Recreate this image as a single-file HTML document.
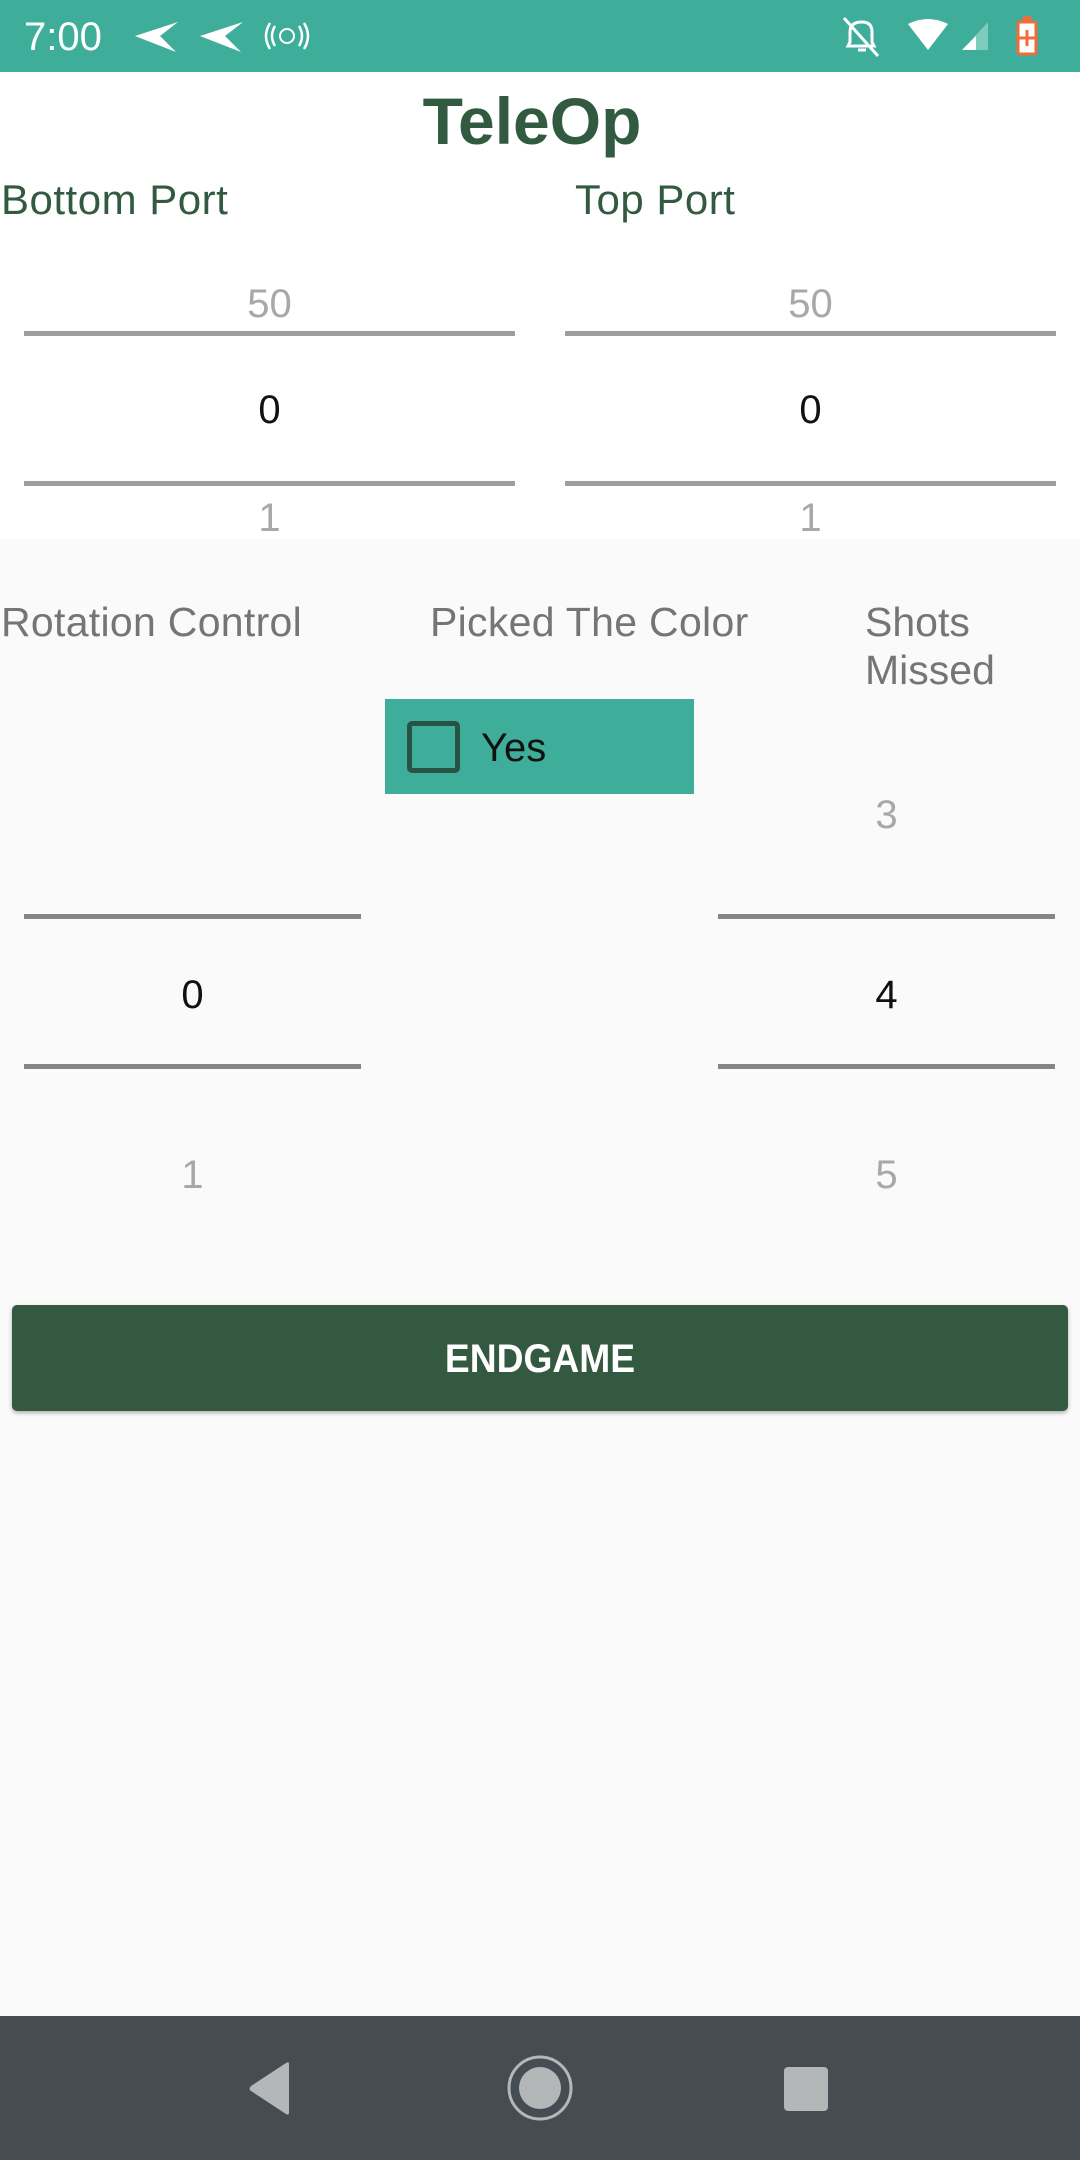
<!DOCTYPE html>
<html><head><meta charset="utf-8"><style>
*{margin:0;padding:0;box-sizing:border-box}
body{width:1080px;height:2160px;background:#fafafa;font-family:"Liberation Sans",sans-serif;position:relative;overflow:hidden}
.a{position:absolute}
.t{position:absolute;white-space:nowrap;line-height:1}
.ln{position:absolute;height:5px;background:#9e9e9e}
.ln2{position:absolute;height:5px;background:#858585}
.c{text-align:center}
</style></head><body>
<div class="a" style="left:0;top:0;width:1080px;height:72px;background:#3eae9b"></div>
<div class="t" style="left:24px;top:17px;font-size:40px;color:#fff">7:00</div>
<svg class="a" style="left:130px;top:18px" width="200" height="40" viewBox="0 0 200 40">
<path d="M5 18 L48 4 L30 18 L46 34 Z" fill="#fff"/>
<path d="M70 18 L113 4 L95 18 L111 34 Z" fill="#fff"/>
<circle cx="157" cy="18" r="7" fill="none" stroke="#fff" stroke-width="2"/>
<path d="M145 8 Q139 18 145 28 M169 8 Q175 18 169 28 M140 5 Q132 18 140 31 M174 5 Q182 18 174 31" fill="none" stroke="#fff" stroke-width="2.5"/>
</svg>
<svg class="a" style="left:840px;top:14px" width="210" height="48" viewBox="0 0 210 48">
<path d="M8 32 L10 28 L10 18 Q10 8 22 8 Q32 8 32 18 L32 28 L34 32 Z M18 36 L26 36" fill="none" stroke="#fff" stroke-width="3"/>
<path d="M4 4 L38 42" stroke="#fff" stroke-width="3"/>
<path d="M68 10 Q88 0 108 10 L88 36 Z" fill="#fff"/>
<path d="M122 36 L148 8 L148 36 Z" fill="#7fcbbd"/>
<path d="M122 36 L136 22 L136 36 Z" fill="#fff"/>
<rect x="178" y="8" width="18" height="32" rx="2" fill="#fff" stroke="#f26b3a" stroke-width="3"/>
<rect x="183" y="2" width="8" height="6" fill="#f26b3a"/>
<path d="M187 16 L187 32 M179 24 L195 24" stroke="#f26b3a" stroke-width="3"/>
</svg>
<div class="a" style="left:0;top:72px;width:1080px;height:467px;background:#fff"></div>
<div class="t c" style="left:-8px;width:1080px;top:88px;font-size:66px;font-weight:bold;color:#325a40">TeleOp</div>
<div class="t" style="left:1px;top:179px;font-size:42px;color:#325a40;letter-spacing:0.5px">Bottom Port</div>
<div class="t" style="left:575px;top:179px;font-size:42px;color:#325a40;letter-spacing:0.5px">Top Port</div>
<div class="t c" style="left:24px;width:491px;top:284px;font-size:40px;color:#a8a8a8">50</div>
<div class="t c" style="left:565px;width:491px;top:284px;font-size:40px;color:#a8a8a8">50</div>
<div class="ln" style="left:24px;width:491px;top:331px"></div>
<div class="ln" style="left:565px;width:491px;top:331px"></div>
<div class="t c" style="left:24px;width:491px;top:390px;font-size:40px;color:#111">0</div>
<div class="t c" style="left:565px;width:491px;top:390px;font-size:40px;color:#111">0</div>
<div class="ln" style="left:24px;width:491px;top:481px"></div>
<div class="ln" style="left:565px;width:491px;top:481px"></div>
<div class="a" style="left:0;top:496px;width:1080px;height:43px;overflow:hidden">
<div class="t c" style="left:24px;width:491px;top:2px;font-size:40px;color:#a8a8a8">1</div>
<div class="t c" style="left:565px;width:491px;top:2px;font-size:40px;color:#a8a8a8">1</div>
</div>
<div class="t" style="left:1px;top:602px;font-size:41px;color:#757575;letter-spacing:0.3px">Rotation Control</div>
<div class="t" style="left:430px;top:602px;font-size:41px;color:#757575;letter-spacing:0.3px">Picked The Color</div>
<div class="t" style="left:865px;top:598px;font-size:41px;color:#757575;line-height:48px;white-space:normal;width:200px">Shots Missed</div>
<div class="a" style="left:385px;top:699px;width:309px;height:95px;background:#3eae9b"></div>
<div class="a" style="left:407px;top:721px;width:53px;height:52px;border:5px solid #275344;border-radius:5px"></div>
<div class="t" style="left:481px;top:728px;font-size:40px;color:#111">Yes</div>
<div class="t c" style="left:718px;width:337px;top:795px;font-size:40px;color:#a8a8a8">3</div>
<div class="ln2" style="left:24px;width:337px;top:914px"></div>
<div class="ln2" style="left:718px;width:337px;top:914px"></div>
<div class="t c" style="left:24px;width:337px;top:975px;font-size:40px;color:#111">0</div>
<div class="t c" style="left:718px;width:337px;top:975px;font-size:40px;color:#111">4</div>
<div class="ln2" style="left:24px;width:337px;top:1064px"></div>
<div class="ln2" style="left:718px;width:337px;top:1064px"></div>
<div class="t c" style="left:24px;width:337px;top:1155px;font-size:40px;color:#a8a8a8">1</div>
<div class="t c" style="left:718px;width:337px;top:1155px;font-size:40px;color:#a8a8a8">5</div>
<div class="a" style="left:12px;top:1305px;width:1056px;height:106px;background:#335940;border-radius:5px;box-shadow:0 2px 4px rgba(0,0,0,.3)"></div>
<div class="t c" style="left:12px;width:1056px;top:1339px;font-size:40px;color:#fff;font-weight:bold;transform:scaleX(0.93)">ENDGAME</div>
<div class="a" style="left:0;top:2016px;width:1080px;height:144px;background:#454c52"></div>
<svg class="a" style="left:0;top:2016px" width="1080" height="144" viewBox="0 0 1080 144">
<path d="M289 48 L289 96 Q289 100 286 98 L251 75 Q248 73 251 70 L286 47 Q289 45 289 48Z" fill="#b3b7b8"/>
<circle cx="540" cy="72" r="31" fill="none" stroke="#b3b7b8" stroke-width="3"/>
<circle cx="540" cy="72" r="21" fill="#b3b7b8"/>
<rect x="784" y="51" width="44" height="44" rx="4" fill="#b3b7b8"/>
</svg>
</body></html>
